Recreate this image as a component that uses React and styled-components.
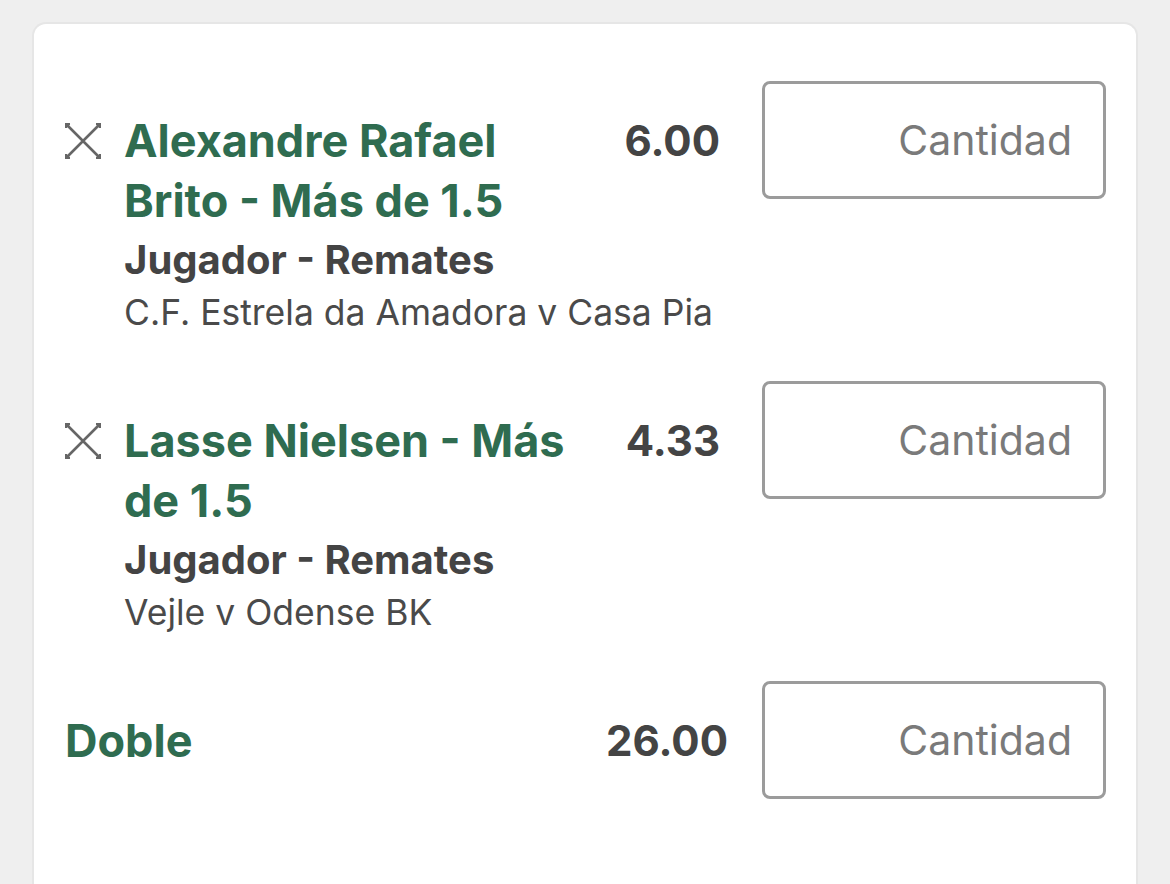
import React from "react";
import styled, { createGlobalStyle } from "styled-components";

const Global = createGlobalStyle`
  html, body { margin: 0; padding: 0; background: #efefef; }
  body { font-family: Inter, Roboto, "Noto Sans", Arial, sans-serif; }
`;

const Page = styled.div`
  padding: 22px 32px 0 32px;
  height: 884px;
  box-sizing: border-box;
  overflow: hidden;
`;

const Card = styled.div`
  background: #fff;
  border: 2px solid #e6e6e6;
  border-bottom: none;
  border-radius: 14px 14px 0 0;
  padding: 57px 30px 0 29px;
  min-height: 900px;
  box-sizing: border-box;
`;

const Row = styled.div`
  display: flex;
  align-items: flex-start;
  margin-bottom: ${(p) => p.$mb || 0}px;
`;

const Left = styled.div`
  flex: 1;
  display: flex;
  align-items: flex-start;
  padding-top: 30px;
  margin-right: ${(p) => p.$mr}px;
`;

const RemoveBtn = styled.button`
  flex: none;
  width: 36px;
  height: 36px;
  margin: 12px 23px 0 2px;
  padding: 0;
  border: none;
  background: none;
  display: flex;
  svg { display: block; }
`;

const Body = styled.div`
  flex: 1;
  min-width: 0;
`;

const TitleLine = styled.div`
  display: flex;
  align-items: flex-start;
  justify-content: space-between;
`;

const Title = styled.div`
  color: #2f6c50;
  font-weight: 700;
  font-size: 45px;
  line-height: 60px;
  max-width: 470px;
  padding-left: ${(p) => p.$pl || 0}px;
`;

const Odds = styled.div`
  color: #444;
  font-weight: 700;
  font-size: 42px;
  line-height: 60px;
  white-space: nowrap;
`;

const Market = styled.div`
  color: #444;
  font-weight: 700;
  font-size: 40px;
  line-height: 57px;
`;

const Event = styled.div`
  color: #4a4a4a;
  font-weight: 400;
  font-size: 35.5px;
  line-height: 50px;
`;

const Stake = styled.input`
  flex: none;
  width: 344px;
  height: 118px;
  box-sizing: border-box;
  border: 3px solid #9b9b9b;
  border-radius: 8px;
  padding: 0 31px 0 16px;
  text-align: right;
  font-family: Inter, Roboto, "Noto Sans", Arial, sans-serif;
  font-size: 41px;
  color: #444;
  background: #fff;
  outline: none;
  &::placeholder { color: #7a7a7a; opacity: 1; }
`;

const CloseIcon = () => (
  <svg width="36" height="36" viewBox="0 0 36 36" fill="none">
    <path d="M2 2 L34 34 M34 2 L2 34" stroke="#666" strokeWidth="2.6" strokeLinecap="butt" />
    <path d="M1 5 V1 H5 M31 1 H35 V5 M35 31 V35 H31 M5 35 H1 V31" stroke="#666" strokeWidth="2.4" />
  </svg>
);

const selections = [
  {
    title: "Alexandre Rafael Brito - Más de 1.5",
    odds: "6.00",
    market: "Jugador - Remates",
    event: "C.F. Estrela da Amadora v Casa Pia",
  },
  {
    title: "Lasse Nielsen - Más de 1.5",
    odds: "4.33",
    market: "Jugador - Remates",
    event: "Vejle v Odense BK",
  },
];

export default function App() {
  return (
    <>
      <Global />
      <Page>
        <Card>
          {selections.map((s) => (
            <Row key={s.title} $mb={43}>
              <Left $mr={42}>
                <RemoveBtn aria-label="Eliminar">
                  <CloseIcon />
                </RemoveBtn>
                <Body>
                  <TitleLine>
                    <Title>{s.title}</Title>
                    <Odds>{s.odds}</Odds>
                  </TitleLine>
                  <Market>{s.market}</Market>
                  <Event>{s.event}</Event>
                </Body>
              </Left>
              <Stake placeholder="Cantidad" />
            </Row>
          ))}
          <Row>
            <Left $mr={34}>
              <Body>
                <TitleLine>
                  <Title $pl={2}>Doble</Title>
                  <Odds>26.00</Odds>
                </TitleLine>
              </Body>
            </Left>
            <Stake placeholder="Cantidad" />
          </Row>
        </Card>
      </Page>
    </>
  );
}
